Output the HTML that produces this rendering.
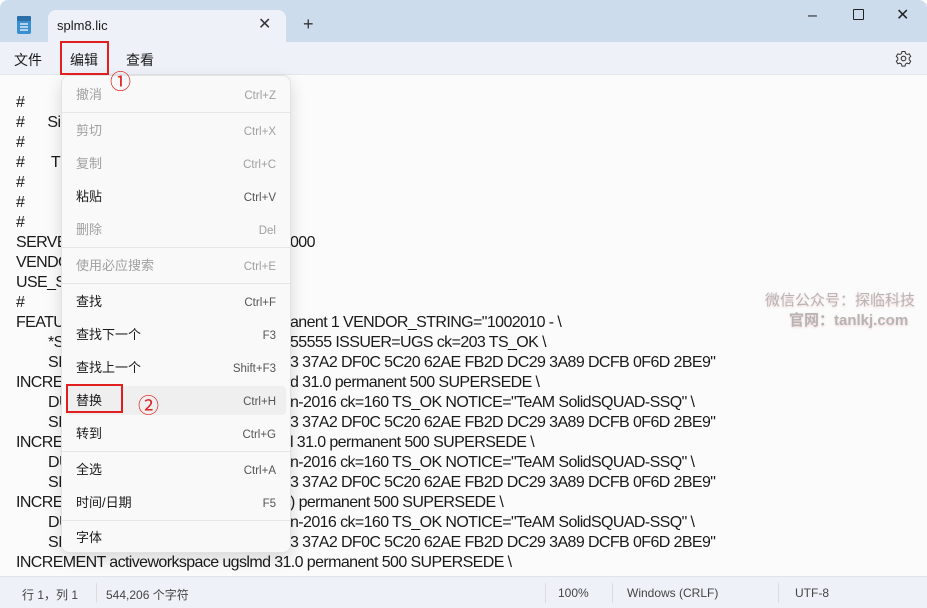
<!DOCTYPE html>
<html><head><meta charset="utf-8"><style>
*{margin:0;padding:0;box-sizing:border-box}
body{width:927px;height:608px;overflow:hidden;background:#fbfbfb;font-family:"Liberation Sans","Noto Sans CJK SC",sans-serif;position:relative;color:#1a1a1a}
.abs{position:absolute;white-space:pre}
#title{position:absolute;left:0;top:0;width:927px;height:42px;background:#cddced;border-radius:8px 8px 0 0}
#tab{position:absolute;left:48px;top:10px;width:238px;height:32px;background:#eef2f8;border-radius:8px 8px 0 0}
#menubar{position:absolute;left:0;top:42px;width:927px;height:33px;background:#eef2f8;border-bottom:1px solid #e3e6ea}
.ed{position:absolute;left:0;top:2px;width:927px;height:572px;font-size:16px;letter-spacing:-0.6px}
#status{position:absolute;left:0;top:576px;width:927px;height:32px;background:#eef2f8;border-top:1px solid #e0e3e7;font-size:12px;color:#444;z-index:3}
#menu{position:absolute;left:61px;top:75px;width:230px;height:478px;background:#f9f9f9;border:1px solid #e2e2e2;border-radius:8px;box-shadow:0 6px 16px rgba(0,0,0,.14);z-index:4}
.mi{position:absolute;left:14px;font-size:13px;color:#1a1a1a;margin-top:-3px}
.mk{position:absolute;right:14px;font-size:11.5px;color:#555}
.dis{color:#a0a0a0}
.sep{position:absolute;left:0;width:228px;height:1px;background:#e6e6e6}
.red{z-index:5}
</style></head><body>
<div id="title"></div>
<div id="tab"></div>
<svg class="abs" style="left:16px;top:15px" width="16" height="20"><rect x="1" y="2" width="14" height="17" rx="2" fill="#3a8fd0"/><rect x="1" y="1" width="14" height="5" rx="1" fill="#2a6fa8"/><g stroke="#fff" stroke-width="1.2"><line x1="4" y1="9" x2="12" y2="9"/><line x1="4" y1="12" x2="12" y2="12"/><line x1="4" y1="15" x2="12" y2="15"/></g></svg>
<div class="abs" style="left:57px;top:18px;font-size:13px">splm8.lic</div>
<div class="abs" style="left:258px;top:14px;font-size:16px;color:#333">✕</div>
<div class="abs" style="left:303px;top:14px;font-size:18px;color:#333">+</div>
<div class="abs" style="left:808px;top:7px;font-size:16px;color:#222">–</div>
<div class="abs" style="left:853px;top:9px;width:11px;height:11px;border:1.3px solid #222;border-radius:1px"></div>
<div class="abs" style="left:896px;top:5px;font-size:16px;color:#222">✕</div>
<div id="menubar"></div>
<div class="abs" style="left:14px;top:50px;font-size:14px">文件</div>
<div class="abs" style="left:70px;top:50px;font-size:14px">编辑</div>
<div class="abs" style="left:126px;top:50px;font-size:14px">查看</div>
<div class="abs red" style="left:60px;top:41px;width:49px;height:34px;border:2px solid #e02020"></div>
<div class="abs red" style="left:110px;top:66px;font-size:21px;color:#e02020">①</div>
<svg class="abs" style="left:895px;top:50px" width="17" height="17" viewBox="0 0 17 17"><circle cx="8.5" cy="8.5" r="2.3" fill="none" stroke="#333" stroke-width="1.1"/><path d="M7 1.5h3l.5 2 1.7 1 2-.7 1.5 2.6-1.5 1.4v2l1.5 1.4-1.5 2.6-2-.7-1.7 1-.5 2h-3l-.5-2-1.7-1-2 .7-1.5-2.6 1.5-1.4v-2l-1.5-1.4 1.5-2.6 2 .7 1.7-1z" fill="none" stroke="#333" stroke-width="1"/></svg>

<div class="ed">
<div class="abs" style="left:16px;top:92px">#</div>
<div class="abs" style="left:16px;top:112px">#      Si</div>
<div class="abs" style="left:16px;top:132px">#</div>
<div class="abs" style="left:16px;top:152px">#       T</div>
<div class="abs" style="left:16px;top:172px">#</div>
<div class="abs" style="left:16px;top:192px">#</div>
<div class="abs" style="left:16px;top:212px">#</div>
<div class="abs" style="left:16px;top:232px">SERVE</div><div class="abs" style="left:290px;top:232px">000</div>
<div class="abs" style="left:16px;top:252px">VENDO</div>
<div class="abs" style="left:16px;top:272px">USE_S</div>
<div class="abs" style="left:16px;top:292px">#</div>
<div class="abs" style="left:16px;top:312px">FEATU</div><div class="abs" style="left:290px;top:312px">anent 1 VENDOR_STRING="1002010 - \</div>
<div class="abs" style="left:48px;top:332px">*S</div><div class="abs" style="left:290px;top:332px">55555 ISSUER=UGS ck=203 TS_OK \</div>
<div class="abs" style="left:48px;top:352px">SI</div><div class="abs" style="left:290px;top:352px">3 37A2 DF0C 5C20 62AE FB2D DC29 3A89 DCFB 0F6D 2BE9"</div>
<div class="abs" style="left:16px;top:372px">INCRE</div><div class="abs" style="left:290px;top:372px">d 31.0 permanent 500 SUPERSEDE \</div>
<div class="abs" style="left:48px;top:392px">DU</div><div class="abs" style="left:290px;top:392px">n-2016 ck=160 TS_OK NOTICE="TeAM SolidSQUAD-SSQ" \</div>
<div class="abs" style="left:48px;top:412px">SI</div><div class="abs" style="left:290px;top:412px">3 37A2 DF0C 5C20 62AE FB2D DC29 3A89 DCFB 0F6D 2BE9"</div>
<div class="abs" style="left:16px;top:432px">INCRE</div><div class="abs" style="left:290px;top:432px">l 31.0 permanent 500 SUPERSEDE \</div>
<div class="abs" style="left:48px;top:452px">DU</div><div class="abs" style="left:290px;top:452px">n-2016 ck=160 TS_OK NOTICE="TeAM SolidSQUAD-SSQ" \</div>
<div class="abs" style="left:48px;top:472px">SI</div><div class="abs" style="left:290px;top:472px">3 37A2 DF0C 5C20 62AE FB2D DC29 3A89 DCFB 0F6D 2BE9"</div>
<div class="abs" style="left:16px;top:492px">INCRE</div><div class="abs" style="left:290px;top:492px">) permanent 500 SUPERSEDE \</div>
<div class="abs" style="left:48px;top:512px">DU</div><div class="abs" style="left:290px;top:512px">n-2016 ck=160 TS_OK NOTICE="TeAM SolidSQUAD-SSQ" \</div>
<div class="abs" style="left:48px;top:532px">SI</div><div class="abs" style="left:290px;top:532px">3 37A2 DF0C 5C20 62AE FB2D DC29 3A89 DCFB 0F6D 2BE9"</div>
<div class="abs" style="left:16px;top:552px">INCREMENT activeworkspace ugslmd 31.0 permanent 500 SUPERSEDE \</div>
</div>
<div class="abs" style="left:765px;top:289px;font-size:15px;color:#b5b5b5;text-shadow:0 1px 2px #f6d0d0">微信公众号：探临科技</div>
<div class="abs" style="left:789px;top:309px;font-size:15px;color:#b5b5b5;font-weight:bold;text-shadow:0 1px 2px #f6d0d0">官网：tanlkj.com</div>

<div id="menu">
<div class="mi dis" style="top:11px">撤消</div><div class="mk dis" style="top:14px">Ctrl+Z</div>
<div class="sep" style="top:36px"></div>
<div class="mi dis" style="top:47px">剪切</div><div class="mk dis" style="top:50px">Ctrl+X</div>
<div class="mi dis" style="top:80px">复制</div><div class="mk dis" style="top:83px">Ctrl+C</div>
<div class="mi" style="top:113px">粘贴</div><div class="mk" style="top:116px">Ctrl+V</div>
<div class="mi dis" style="top:146px">删除</div><div class="mk dis" style="top:149px">Del</div>
<div class="sep" style="top:171px"></div>
<div class="mi dis" style="top:182px">使用必应搜索</div><div class="mk dis" style="top:185px">Ctrl+E</div>
<div class="sep" style="top:207px"></div>
<div class="mi" style="top:218px">查找</div><div class="mk" style="top:221px">Ctrl+F</div>
<div class="mi" style="top:251px">查找下一个</div><div class="mk" style="top:254px">F3</div>
<div class="mi" style="top:284px">查找上一个</div><div class="mk" style="top:287px">Shift+F3</div>
<div style="position:absolute;left:4px;top:310px;width:220px;height:29px;background:#efefef;border-radius:4px"></div>
<div class="mi" style="top:317px">替换</div><div class="mk" style="top:320px">Ctrl+H</div>
<div class="mi" style="top:350px">转到</div><div class="mk" style="top:353px">Ctrl+G</div>
<div class="sep" style="top:375px"></div>
<div class="mi" style="top:386px">全选</div><div class="mk" style="top:389px">Ctrl+A</div>
<div class="mi" style="top:419px">时间/日期</div><div class="mk" style="top:422px">F5</div>
<div class="sep" style="top:444px"></div>
<div class="mi" style="top:454px">字体</div>
</div>
<div class="abs red" style="left:66px;top:384px;width:57px;height:29px;border:2px solid #e02020"></div>
<div class="abs red" style="left:138px;top:390px;font-size:21px;color:#e02020">②</div>

<div id="status">
<div class="abs" style="left:22px;top:9px">行 1，列 1</div>
<div class="abs" style="left:96px;top:6px;width:1px;height:20px;background:#ddd"></div>
<div class="abs" style="left:106px;top:9px">544,206 个字符</div>
<div class="abs" style="left:545px;top:6px;width:1px;height:20px;background:#ddd"></div>
<div class="abs" style="left:558px;top:9px">100%</div>
<div class="abs" style="left:612px;top:6px;width:1px;height:20px;background:#ddd"></div>
<div class="abs" style="left:627px;top:9px">Windows (CRLF)</div>
<div class="abs" style="left:778px;top:6px;width:1px;height:20px;background:#ddd"></div>
<div class="abs" style="left:795px;top:9px">UTF-8</div>
</div>
</body></html>
